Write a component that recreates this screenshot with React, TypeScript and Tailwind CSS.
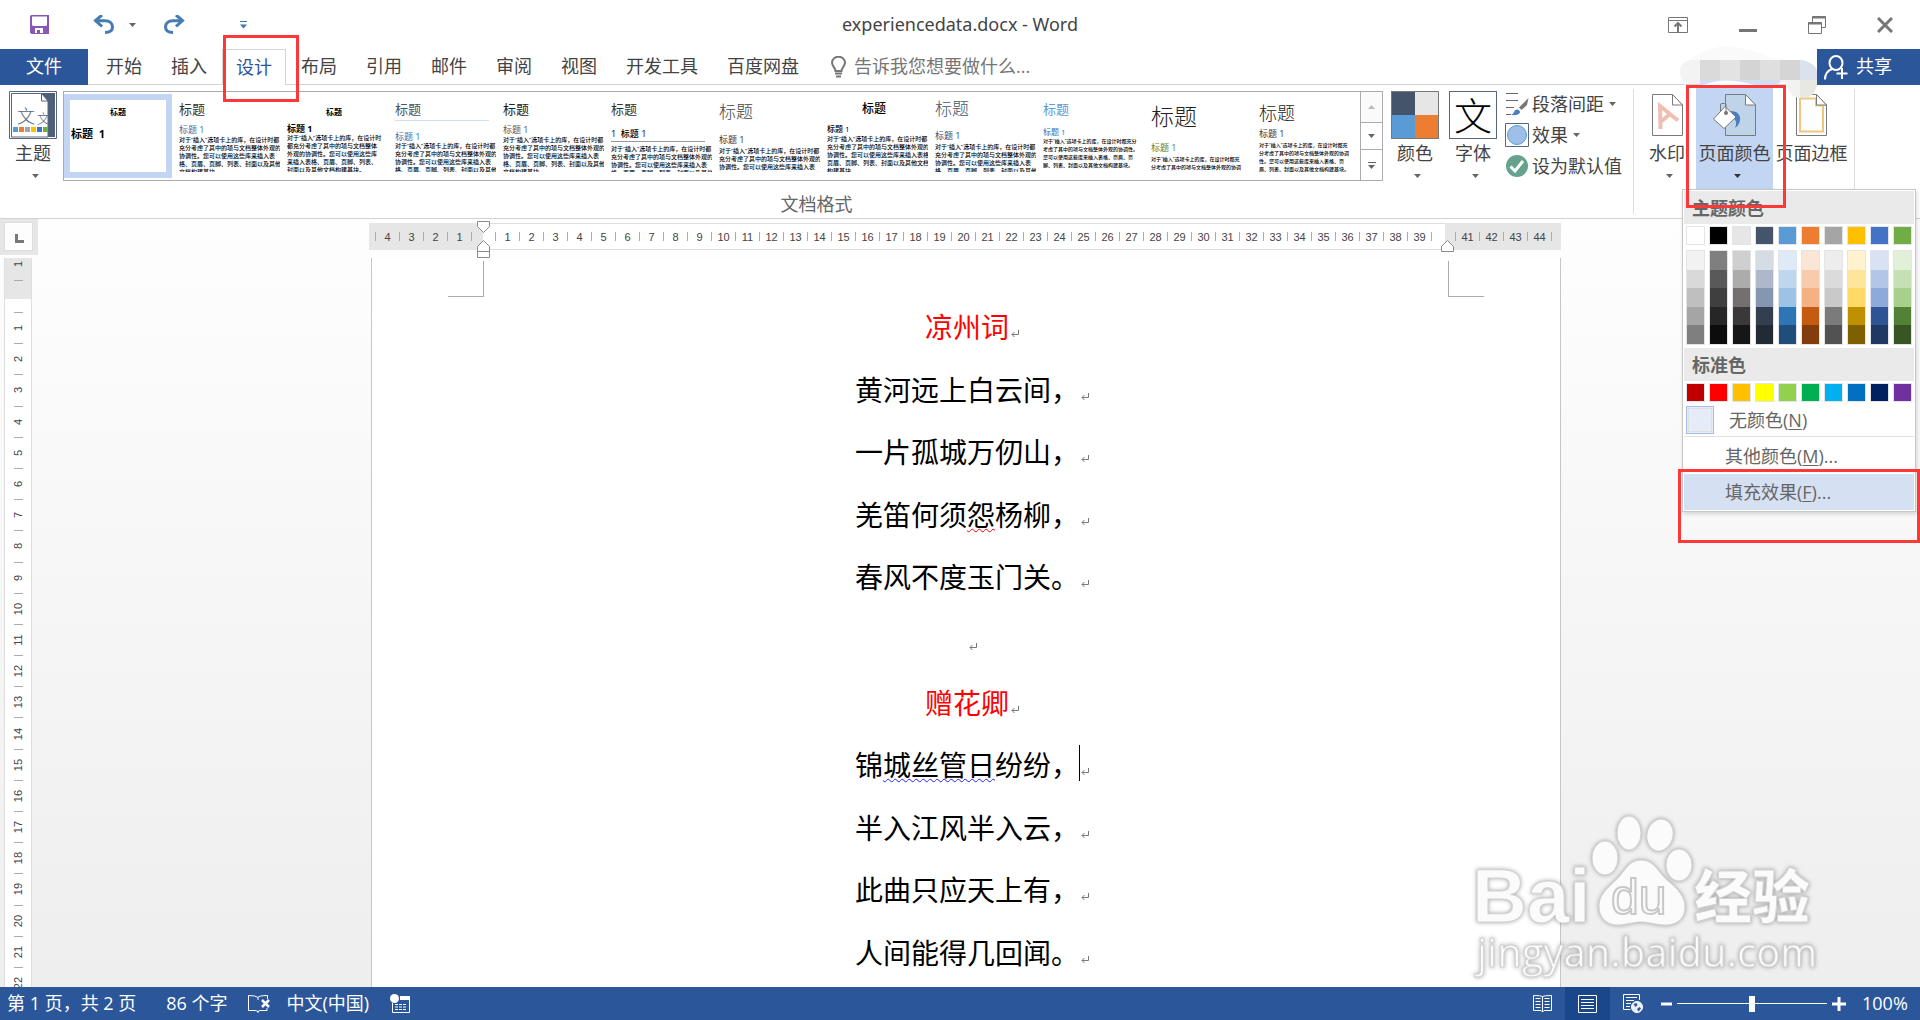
import clsx from "clsx";
import React from "react";

const TABS = ["开始", "插入", "设计", "布局", "引用", "邮件", "审阅", "视图", "开发工具", "百度网盘"];

const BODY = [
  "对于“插入”选项卡上的库\uFF0C在设计时都",
  "充分考虑了其中的项与文档整体外观的",
  "协调性。您可以使用这些库来插入表",
  "格、页眉、页脚、列表、封面以及其他",
  "文档构建基块。",
];

const BODY_NARROW = [
  "对于“插入”选项卡上的库\uFF0C在设计时",
  "都充分考虑了其中的项与文档整体",
  "外观的协调性。您可以使用这些库",
  "来插入表格、页眉、页脚、列表、",
  "封面以及其他文档构建基块。",
];

const BODY_CENTERED = [
  "对于“插入”选项卡上的库\uFF0C在设计时都",
  "充分考虑了其中的项与文档整体外观的",
  "协调性。您可以使用这些库来插入表格",
  "页眉、页脚、列表、封面以及其他文档",
  "构建基块。",
];

const BODY_WIDE = [
  "对于“插入”选项卡上的库\uFF0C在设计时都充分",
  "考虑了其中的项与文档整体外观的协调性。",
  "您可以使用这些库来插入表格、页眉、页",
  "脚、列表、封面以及其他文档构建基块。",
];

const BODY_LOOSE = [
  "对于“插入”选项卡上的库\uFF0C在设计时都充",
  "分考虑了其中的项与文档整体外观的协调",
  "性。您可以使用这些库来插入表格、页",
  "眉、列表、封面以及其他文档构建基块。",
];

type Preview = {
  title: string;
  heading: string;
  body: string;
  lines: string[];
  headingText?: string;
};

const PREVIEWS: Preview[] = [
  {
    title: "text-[13px] leading-[18px] text-[#333]",
    heading: "mt-[7px] text-[9px] text-[#41719c]",
    body: "mt-px text-[6px]",
    lines: BODY,
  },
  {
    title: "text-center text-[8px] leading-[24px] font-bold text-black",
    heading: "text-[9px] font-bold text-black",
    body: "text-[6px]",
    lines: BODY_NARROW,
  },
  {
    title: "border-b border-[#cfe2f3] pb-[2px] text-[13px] leading-[18px] text-[#44546a]",
    heading: "mt-[11px] text-[9px] text-[#2e74b5]",
    body: "text-[6px]",
    lines: BODY,
  },
  {
    title: "text-[13px] leading-[18px] text-[#222]",
    heading: "mt-[7px] text-[9px] text-[#555]",
    body: "mt-px text-[6px]",
    lines: BODY,
  },
  {
    title: "text-[13px] leading-[18px] text-[#333]",
    heading: "mt-[11px] border-b border-[#999] pb-[2px] text-[9px] font-medium text-black",
    body: "mt-[3px] text-[6px]",
    lines: BODY,
    headingText: "1  标题 1",
  },
  {
    title: "text-[17px] leading-[24px] font-light text-[#444]",
    heading: "mt-[11px] text-[9px] text-[#333]",
    body: "mt-[2px] text-[6px]",
    lines: BODY,
  },
  {
    title: "text-center text-[12px] leading-[18px] font-medium text-black",
    heading: "mt-[6px] text-[8px] font-medium text-black",
    body: "mt-px text-[6px]",
    lines: BODY_CENTERED,
  },
  {
    title: "text-[17px] leading-[18px] font-light text-[#44546a]",
    heading: "mt-[13px] text-[9px] text-[#1f4e79]",
    body: "mt-[2px] text-[6px]",
    lines: BODY,
  },
  {
    title: "text-[13px] leading-[18px] text-[#5b9bd5]",
    heading: "mt-[9px] text-[8px] text-[#2e74b5]",
    body: "text-[5px]",
    lines: BODY_WIDE,
  },
  {
    title: "text-[23px] leading-[32px] font-light text-[#222]",
    heading: "mt-[11px] text-[9px] text-[#538135]",
    body: "mt-[2px] text-[5px]",
    lines: BODY_LOOSE,
  },
  {
    title: "text-[18px] leading-[26px] font-light text-[#222]",
    heading: "mt-[3px] text-[9px] text-[#333]",
    body: "mt-[2px] text-[5px]",
    lines: BODY_LOOSE,
  },
];

const THEME_COLORS = [
  { name: "白色", base: "#ffffff", shades: ["#f2f2f2", "#d9d9d9", "#bfbfbf", "#a5a5a5", "#7f7f7f"] },
  { name: "黑色", base: "#000000", shades: ["#7f7f7f", "#595959", "#3f3f3f", "#262626", "#0c0c0c"] },
  { name: "浅灰", base: "#e7e6e6", shades: ["#d0cece", "#aeabab", "#757070", "#3a3838", "#171616"] },
  { name: "蓝灰", base: "#44546a", shades: ["#d6dce4", "#adb9ca", "#8496b0", "#323f4f", "#222a35"] },
  { name: "蓝色", base: "#5b9bd5", shades: ["#deebf6", "#bdd7ee", "#9cc3e5", "#2e75b5", "#1e4e79"] },
  { name: "橙色", base: "#ed7d31", shades: ["#fbe5d5", "#f7cbac", "#f4b183", "#c55a11", "#833c0b"] },
  { name: "灰色", base: "#a5a5a5", shades: ["#ededed", "#dbdbdb", "#c9c9c9", "#7b7b7b", "#525252"] },
  { name: "金色", base: "#ffc000", shades: ["#fff2cc", "#fee599", "#ffd965", "#bf9000", "#7f6000"] },
  { name: "深蓝", base: "#4472c4", shades: ["#d9e2f3", "#b4c6e7", "#8eaadb", "#2f5496", "#1f3864"] },
  { name: "绿色", base: "#70ad47", shades: ["#e2efd9", "#c5e0b3", "#a8d08d", "#538135", "#375623"] },
];

const STANDARD_COLORS = [
  "#c00000", "#ff0000", "#ffc000", "#ffff00", "#92d050",
  "#00b050", "#00b0f0", "#0070c0", "#002060", "#7030a0",
];

const LEFT_MARKS = [4, 3, 2, 1];
const TEXT_MARKS = Array.from({ length: 39 }, (_, i) => i + 1);
const RIGHT_MARKS = [41, 42, 43, 44];
const SIDE_MARKS = Array.from({ length: 22 }, (_, i) => i + 1);

const Caret: React.FC<{ className?: string }> = ({ className }) => (
  <svg viewBox="0 0 7 4" className={clsx("h-1 w-[7px] shrink-0", className)} fill="currentColor">
    <path d="M0 0h7L3.5 4z" />
  </svg>
);

const SaveIcon = () => (
  <svg viewBox="0 0 19 19" className="h-[19px] w-[19px]">
    <path d="M0 1.500Q0 0 1.500 0H19V19H1.500L0 17.500z" fill="#8a58b0" />
    <path d="M2 1.500h15V10l-1 1H3l-1-1z" fill="#fff" />
    <path d="M5 13h8v5h-3v-3H7v3H5z" fill="#fff" />
  </svg>
);

const UndoIcon: React.FC<{ flip?: boolean }> = ({ flip }) => (
  <svg viewBox="0 0 21 19" className={clsx("h-[19px] w-[21px]", flip && "-scale-x-100")} fill="none" stroke="#467cb2" strokeWidth="3">
    <path d="M9 0L2.500 5.500L9 11.500" />
    <path d="M2.500 5.700H12C17 5.700 19.500 8.500 19.500 12C19.500 15.500 17 17.500 12 17.500" />
  </svg>
);

const TitleBar = () => (
  <header className="relative flex h-[49px] shrink-0 items-center justify-between">
    <div className="flex h-[46px] items-center pl-[30px]">
      <button aria-label="保存"><SaveIcon /></button>
      <button aria-label="撤消" className="ml-11"><UndoIcon /></button>
      <button aria-label="撤消列表" className="ml-[15px] text-[#666]"><Caret /></button>
      <button aria-label="恢复" className="ml-7"><UndoIcon flip /></button>
      <button aria-label="自定义快速访问工具栏" className="ml-[55px]">
        <svg viewBox="0 0 7 8" className="h-2 w-[7px]" fill="#3f76b0">
          <path d="M0 0h7v1H0zM0 3.500h7L3.500 7.500z" />
        </svg>
      </button>
    </div>
    <h1 className="absolute inset-x-0 top-3 text-center font-['Noto_Sans',sans-serif] text-lg leading-6 text-[#444]">
      experiencedata.docx - Word
    </h1>
    <div className="relative flex h-[46px] items-center gap-[51px] pr-[27px] text-[#767676]">
      <button aria-label="功能区显示选项">
        <svg viewBox="0 0 20 16" className="h-4 w-5" fill="none" stroke="currentColor">
          <path d="M0.500 0.500h19v15H0.500zM0.500 3.500h19" />
          <path d="M10 15V6.500M6.500 9.500L10 6L13.500 9.500" strokeWidth="2" />
        </svg>
      </button>
      <button aria-label="最小化">
        <svg viewBox="0 0 18 16" className="h-4 w-[18px]" fill="currentColor"><path d="M0 12h18v3H0z" /></svg>
      </button>
      <button aria-label="向下还原">
        <svg viewBox="0 0 18 18" className="h-[18px] w-[18px]" fill="none" stroke="currentColor">
          <path d="M4.500 6V0.500h13v11H14" />
          <path d="M4 1.500h14" strokeWidth="2" />
          <path d="M0.500 6.500h13v11H0.500z" />
          <path d="M0 7.500h14" strokeWidth="2" />
        </svg>
      </button>
      <button aria-label="关闭">
        <svg viewBox="0 0 16 16" className="h-4 w-4" fill="none" stroke="currentColor" strokeWidth="3">
          <path d="M1 1l14 14M15 1L1 15" />
        </svg>
      </button>
    </div>
  </header>
);

const TabRow = () => (
  <nav className="flex h-9 shrink-0 items-stretch border-b border-[#d5d5d5] text-lg text-[#444]">
    <button className="-mb-px w-[88px] bg-[#2b579a] pb-[2px] text-white">文件</button>
    <div className="ml-1 flex gap-px">
      {TABS.map((tab) => (
        <button
          key={tab}
          className={clsx(
            "px-[14px] pb-[2px]",
            tab === "设计" && "-mb-px border border-b-0 border-[#d5d5d5] bg-white px-[13px]! text-[#2b579a]"
          )}
        >
          {tab}
        </button>
      ))}
    </div>
    <label className="ml-[18px] flex items-center gap-2 text-[#767676]">
      <svg viewBox="0 0 15 22" className="h-[22px] w-[15px]" fill="none" stroke="currentColor" strokeWidth="2">
        <path d="M4.500 15C4.500 11.500 1 10.500 1 6.500A6.500 5.800 0 0 1 14 6.500C14 10.500 10.500 11.500 10.500 15z" />
        <path d="M4 17.500h7M5 20.500h5" />
      </svg>
      <input
        aria-label="告诉我您想要做什么"
        placeholder="告诉我您想要做什么..."
        className="w-[200px] bg-transparent pb-[2px] placeholder:text-[#767676] focus:outline-none"
      />
    </label>
    <button className="z-10 -mb-px ml-auto flex w-[103px] items-center gap-2 bg-[#2b579a] pl-[7px] text-white">
      <svg viewBox="0 0 24 25" className="h-[25px] w-6" fill="none" stroke="currentColor" strokeWidth="2">
        <ellipse cx="12" cy="8" rx="6.500" ry="7" />
        <path d="M1 24.500C1 19 4 15.500 8 14M18 13v11M12.500 18.500h11" />
      </svg>
      <span className="pb-[2px]">共享</span>
    </button>
  </nav>
);

const AccountSmudge = () => (
  <svg viewBox="0 0 137 54" className="pointer-events-none absolute top-[44px] right-[103px] z-20 h-[54px] w-[137px]">
    <defs>
      <clipPath id="pill">
        <path d="M10 16H122Q137 20 137 28V40Q135 54 122 54Q108 54 106 38L90 41H10Q0 38 0 28Q0 18 10 16z" />
      </clipPath>
    </defs>
    <path d="M10 16Q20 6 44 2Q70 4 92 14L110 16z" fill="#fafafa" />
    <g clipPath="url(#pill)">
      <path d="M0 16h20v24H0z" fill="#f3f3f3" />
      <path d="M20 16h20v20H20z" fill="#dadada" />
      <path d="M40 16h20v20H40z" fill="#e3e3e3" />
      <path d="M60 16h20v20H60z" fill="#d4d4d4" />
      <path d="M80 16h20v20H80z" fill="#dfdfdf" />
      <path d="M100 16h20v20h-20z" fill="#d5d5d5" />
      <path d="M120 16h17v20h-17z" fill="#dbe2ee" />
      <path d="M20 36h80v5H20z" fill="#d3def2" />
      <path d="M24 41Q44 32 74 41z" fill="#fff" />
      <path d="M100 36h20v18h-20z" fill="#f2f2f2" />
      <path d="M120 36h17v18h-17z" fill="#e9e7e4" />
    </g>
  </svg>
);

const ThemeIcon = () => (
  <svg viewBox="0 0 48 48" className="h-12 w-12">
    <defs>
      <clipPath id="sheet"><path d="M3 3h36v42H3z" /></clipPath>
    </defs>
    <path d="M0.500 0.500h47v47H0.500z" fill="#fff" stroke="#56667f" />
    <path d="M33 2h13v44h-7z" fill="#4f5f7a" />
    <path d="M2.500 2.500h30l6.500 7.500v36H2.500z" fill="#fff" stroke="#56667f" />
    <path d="M32.500 2.500v7.500h6.500z" fill="#fff" stroke="#56667f" />
    <g clipPath="url(#sheet)" fill="#56667f" fontFamily="Noto Sans CJK SC" fontWeight="300">
      <text x="8" y="32" fontSize="18">文</text>
      <text x="28" y="32" fontSize="13">文</text>
      <path d="M4 36h5v5H4z" fill="#5b9bd5" />
      <path d="M10 36h5v5h-5z" fill="#ed7d31" />
      <path d="M16 36h5v5h-5z" fill="#a5a5a5" />
      <path d="M22 36h5v5h-5z" fill="#ffc000" />
      <path d="M28 36h5v5h-5z" fill="#4472c4" />
      <path d="M34 36h5v5h-5z" fill="#70ad47" />
    </g>
  </svg>
);

const SheetOutline: React.FC<{ fill?: string; x?: number }> = ({ fill = "#fff", x = 0 }) => (
  <g transform={`translate(${x} 0)`} fill={fill} stroke="#7a7a7a">
    <path d="M0.500 0.500h20l10 10.500v30.500h-30z" />
    <path d="M20.500 0.500V11h10z" fill="#fff" />
  </g>
);

const BigButton: React.FC<{
  label: string;
  caret?: boolean;
  className?: string;
  caretClass?: string;
  children: React.ReactNode;
}> = ({ label, caret = true, className, caretClass, children }) => (
  <button className={clsx("flex h-[104px] shrink-0 flex-col items-center pt-[6px] whitespace-nowrap", className)}>
    <span className="flex h-12 items-center">{children}</span>
    <span className="mt-[2px] text-lg leading-6">{label}</span>
    {caret && <Caret className={clsx("mt-[9px] ml-[5px] text-[#666]", caretClass)} />}
  </button>
);

const Gallery = () => (
  <div className="mt-[6px] ml-[6px] flex h-[90px] min-w-0 flex-1 border border-[#ababab]">
    <div className="flex min-w-0 flex-1 overflow-hidden py-[2px] text-left">
      <button className="h-[84px] w-[108px] shrink-0 border-6 border-[#c2d5f2] text-left font-bold text-black">
        <span className="block text-center text-[8px] leading-6">标题</span>
        <span className="block h-12 pl-px text-[11px] leading-[20px]">标题&nbsp; 1</span>
      </button>
      {PREVIEWS.map((p, i) => (
        <button key={i} className="h-[84px] w-[108px] shrink-0 py-[6px] pl-[7px] text-left">
          <span className="block h-[72px] overflow-hidden whitespace-pre">
            <span className={clsx("mr-[7px] block", p.title)}>标题</span>
            <span className={clsx("mr-[7px] block leading-[10px]", p.heading)}>{p.headingText ?? "标题 1"}</span>
            <span className={clsx("block leading-[8px] font-medium text-black", p.body)}>
              {p.lines.map((line) => (
                <span key={line} className="block">{line}</span>
              ))}
            </span>
          </span>
        </button>
      ))}
    </div>
    <div className="flex w-[22px] shrink-0 flex-col border-l border-[#ababab] text-[#666]">
      <button aria-label="上一行" className="flex h-[30px] items-center justify-center bg-[#fafafa] text-[#bbb]">
        <Caret className="rotate-180" />
      </button>
      <button aria-label="下一行" className="flex h-7 items-center justify-center border-y border-[#ababab]">
        <Caret />
      </button>
      <button aria-label="其他" className="flex flex-1 flex-col items-center justify-center gap-[2px]">
        <span className="h-px w-2 bg-[#666]" />
        <Caret />
      </button>
    </div>
  </div>
);

const Ribbon = () => (
  <section className="flex h-[134px] shrink-0 border-b border-[#d2d2d2] text-[#444]">
    <div className="flex min-w-0 flex-1 flex-col">
      <div className="flex">
        <BigButton label="主题" className="ml-[9px] w-12"><ThemeIcon /></BigButton>
        <Gallery />
        <BigButton label="颜色" className="ml-2 w-12">
          <svg viewBox="0 0 48 48" className="h-12 w-12">
            <path d="M0 0h24v24H0z" fill="#44546a" />
            <path d="M24 0h24v24H24z" fill="#e7e6e6" />
            <path d="M0 24h24v24H0z" fill="#5b9bd5" />
            <path d="M24 24h24v24H24z" fill="#ed7d31" />
            <path d="M0.500 0.500h47v47H0.500z" fill="none" stroke="#777" />
          </svg>
        </BigButton>
        <BigButton label="字体" className="ml-[10px] w-12">
          <span className="flex h-12 w-12 items-center justify-center border border-[#56667f] bg-white text-[38px] leading-none font-light text-black">
            文
          </span>
        </BigButton>
        <div className="mt-[3px] mr-[11px] ml-2 flex w-[117px] flex-col text-lg whitespace-nowrap">
          <button className="flex h-[31px] items-center">
            <svg viewBox="0 0 24 24" className="h-6 w-6" fill="none" stroke="#666">
              <path d="M1 1.500h12M1 8.500h12M1 15.500h8M1 22.500h5" />
              <path d="M23.500 6L22 13l-5.500 5-2.500-2.500z" fill="#777" stroke="none" />
              <path d="M6 23c3-1 2.500-3.500 4.500-5s5 0.500 4.500 2.500S11 23.500 6 23z" fill="#4a80bd" stroke="none" />
            </svg>
            <span className="ml-[3px]">段落间距</span>
            <Caret className="ml-[5px] text-[#666]" />
          </button>
          <button className="flex h-[31px] items-center">
            <svg viewBox="0 0 24 24" className="h-6 w-6">
              <path d="M0.500 0.500h23v23H0.500z" fill="#fff" stroke="#56667f" />
              <circle cx="12" cy="12" r="9.500" fill="#9dbfe8" stroke="#5b9bd5" />
            </svg>
            <span className="ml-[3px]">效果</span>
            <Caret className="ml-[5px] text-[#666]" />
          </button>
          <button className="flex h-[31px] items-center">
            <svg viewBox="0 0 24 24" className="h-6 w-6">
              <circle cx="12" cy="12" r="11" fill="#66a38c" />
              <path d="M5.500 12.500l4.500 4.500 8-10" fill="none" stroke="#fff" strokeWidth="3" />
            </svg>
            <span className="ml-[3px]">设为默认值</span>
          </button>
        </div>
      </div>
      <p className="mt-[3px] text-center text-lg leading-6 text-[#666]">文档格式</p>
    </div>
    <div className="my-1 w-px bg-[#dedede]" />
    <div className="flex pl-[2px]">
      <BigButton label="水印" className="w-[60px] pl-[2px]">
        <svg viewBox="0 0 31 42" className="h-[42px] w-[31px]">
          <SheetOutline />
          <path d="M8.500 35L8 12L26 26.500M8.500 28L18 20" fill="none" stroke="#f0bfb4" strokeWidth="4" />
        </svg>
      </BigButton>
      <BigButton label="页面颜色" className="w-[77px] bg-[#c2d5f2]" caretClass="text-[#333]!">
        <svg viewBox="0 0 43 42" className="h-[42px] w-[43px]">
          <SheetOutline fill="#bfd4e8" x={12} />
          <path d="M16 17Q25 16 27 23Q28 30 22 34Q25 27 20 24z" fill="#4a80bd" />
          <path d="M0.500 25L12 12.500L23 23L11 34.500z" fill="#fff" stroke="#777" />
          <path d="M7.500 17V11Q7.500 9.500 9 9.500H11.500Q13 9.500 13 11V19" fill="none" stroke="#777" />
          <circle cx="13" cy="19" r="2" fill="#777" />
        </svg>
      </BigButton>
      <BigButton label="页面边框" caret={false} className="w-[77px]">
        <svg viewBox="0 0 31 42" className="h-[42px] w-[31px]">
          <SheetOutline />
          <path d="M4 4.500h16V11.500h7v26H4z" fill="none" stroke="#ecc77c" strokeWidth="2" />
          <path d="M20.500 0.500V11h10z" fill="#fff" stroke="#7a7a7a" />
        </svg>
      </BigButton>
    </div>
    <div className="my-1 mr-[65px] ml-1 w-px bg-[#dedede]" />
  </section>
);

const PageColorMenu = () => (
  <div className="absolute top-[189px] right-1 z-20 w-[234px] border border-[#c6c6c6] bg-white p-px text-lg leading-6 text-[#666] shadow-[1px_2px_4px_rgba(0,0,0,0.15)]">
    <h2 className="h-[33px] bg-[#eaeaea] px-2 pt-[5px] font-bold">主题颜色</h2>
    <div className="flex gap-1 px-[2px] pt-[2px]">
      {THEME_COLORS.map((c) => (
        <button key={c.name} aria-label={c.name} className="h-[19px] w-[19px] border border-[#e2e4e7]" style={{ background: c.base }} />
      ))}
    </div>
    <div className="flex gap-1 px-[2px] pt-[5px] pb-[3px]">
      {THEME_COLORS.map((c) => (
        <div key={c.name} className="flex h-[95px] w-[19px] flex-col border border-[#e2e4e7]">
          {c.shades.map((shade) => (
            <button key={shade} aria-label={`${c.name} ${shade}`} className="flex-1" style={{ background: shade }} />
          ))}
        </div>
      ))}
    </div>
    <h2 className="h-[33px] bg-[#eaeaea] px-2 pt-[5px] font-bold">标准色</h2>
    <div className="flex gap-1 px-[2px] pt-[2px]">
      {STANDARD_COLORS.map((c) => (
        <button key={c} aria-label={c} className="h-[19px] w-[19px] border border-[#e2e4e7]" style={{ background: c }} />
      ))}
    </div>
    <button className="flex h-[35px] w-full items-center border-b border-[#e1e1e1] pt-px pl-[2px]">
      <span className="mr-[15px] h-7 w-7 border border-[#a3bde3] bg-[#e5ecf7] p-px">
        <span className="block h-full border border-[#dcdfe4]" />
      </span>
      <span>无颜色(<u className="underline-offset-2">N</u>)</span>
    </button>
    <button className="block h-[37px] w-full pl-[41px] text-left">
      其他颜色(<u className="underline-offset-2">M</u>)...
    </button>
    <button className="block h-9 w-full bg-[#d5e0f2] pl-[41px] text-left">
      填充效果(<u className="underline-offset-2">F</u>)...
    </button>
  </div>
);

const RulerCell: React.FC<{ mark: number }> = ({ mark }) => (
  <span className="flex w-6 items-center">
    <span className="h-[9px] w-px bg-[#ababab]" />
    <span className="flex-1 pt-[2px] text-center">{mark}</span>
  </span>
);

const RulerStub: React.FC = () => (
  <span className="flex items-center">
    <span className="h-[9px] w-px bg-[#ababab]" />
  </span>
);

const HorizontalRuler = () => (
  <div className="relative mt-1 flex h-[27px] w-[1190px] shrink-0 font-['Liberation_Sans',sans-serif] text-[11px] text-[#444]">
    <div className="-ml-[2px] flex w-[114px] bg-[#e6e6e6] pl-[6px]">
      {LEFT_MARKS.map((m) => <RulerCell key={m} mark={m} />)}
      <RulerStub />
    </div>
    <div className="flex flex-1 border-y border-[#dedede] bg-white pl-3">
      {TEXT_MARKS.map((m) => <RulerCell key={m} mark={m} />)}
      <RulerStub />
    </div>
    <div className="flex w-[116px] bg-[#e6e6e6] pl-[10px]">
      {RIGHT_MARKS.map((m) => <RulerCell key={m} mark={m} />)}
      <RulerStub />
    </div>
    <svg viewBox="0 0 13 37" className="absolute -top-[2px] left-[106px] h-[37px] w-[13px]" fill="#fff" stroke="#8a8a8a">
      <path d="M0.500 0.500h12v5L6.500 11.500L0.500 5.500z" />
      <path d="M0.500 36.500h12v-11L6.500 19.500L0.500 25.500zM0.500 30.500h12" />
    </svg>
    <svg viewBox="0 0 13 12" className="absolute top-[17px] left-[1070px] h-3 w-[13px]" fill="#fff" stroke="#8a8a8a">
      <path d="M0.500 11.500h12v-5L6.500 0.500L0.500 6.500z" />
    </svg>
  </div>
);

const VerticalRuler = () => (
  <div className="w-[38px]">
    <div className="flex h-9 bg-[#e6e6e6] pt-[3px] pl-1">
      <button aria-label="左对齐制表符" className="flex h-[29px] w-[29px] items-center justify-center border border-[#dedede] bg-[#fdfdfd]">
        <span className="mt-1 ml-px h-[9px] w-[9px] border-b-3 border-l-3 border-[#777]" />
      </button>
    </div>
    <div className="mt-[3px] ml-1 flex w-7 flex-col items-center border-x border-[#dedede] bg-white font-['Liberation_Sans',sans-serif] text-[11px] leading-3 text-[#444]">
      <div className="flex h-[41px] w-full flex-col items-center bg-[#e6e6e6]">
        <span className="-rotate-90">1</span>
        <span className="mt-[10px] h-px w-[9px] bg-[#ababab]" />
      </div>
      <div className="mt-[13px] flex h-[686px] flex-col">
        {SIDE_MARKS.map((m) => (
          <span key={m} className="flex flex-1 flex-col items-center">
            <span className="h-px w-[9px] bg-[#ababab]" />
            <span className="flex flex-1 items-center"><span className="-rotate-90">{m}</span></span>
          </span>
        ))}
      </div>
    </div>
  </div>
);

type VerseProps = {
  title?: boolean;
  cursor?: boolean;
  children?: React.ReactNode;
};

const Verse: React.FC<VerseProps> = ({ title, cursor, children }) => (
  <p className={clsx("flex flex-1 items-center justify-center", title ? "text-[#ff0000]" : "text-black")}>
    <span className="relative h-10">
      {children}
      {cursor && <span className="absolute top-0 left-full h-9 w-px bg-black" />}
      <svg viewBox="0 0 8 7" className="absolute top-[23px] left-full ml-[2px] h-[7px] w-2" fill="none" stroke="#777">
        <path d="M7.500 0v4.500H1M3.500 2L1 4.500L3.500 7" />
      </svg>
    </span>
  </p>
);

const Page = () => (
  <article className="relative mt-2 w-[1190px] flex-1 border-x border-[#c6c6c6] bg-white pt-[38px] pl-[2px]">
    <span className="absolute top-[3px] left-[76px] h-9 w-9 border-r border-b border-[#ababab]" />
    <span className="absolute top-[3px] right-[76px] h-9 w-9 border-b border-l border-[#ababab]" />
    <div className="flex h-[688px] flex-col text-[28px] leading-10">
      <Verse title>凉州词</Verse>
      <Verse>黄河远上白云间&#xFF0C;</Verse>
      <Verse>一片孤城万仞山&#xFF0C;</Verse>
      <Verse>
        羌笛何须<span className="underline decoration-[#ff0000] decoration-wavy decoration-1 underline-offset-2">怨</span>杨柳&#xFF0C;
      </Verse>
      <Verse>春风不度玉门关。</Verse>
      <Verse />
      <Verse title>赠花卿</Verse>
      <Verse cursor>
        锦<span className="underline decoration-[#2222ff] decoration-wavy decoration-1 underline-offset-2">城丝管日</span>纷纷&#xFF0C;
      </Verse>
      <Verse>半入江风半入云&#xFF0C;</Verse>
      <Verse>此曲只应天上有&#xFF0C;</Verse>
      <Verse>人间能得几回闻。</Verse>
    </div>
  </article>
);

const SiteMark = () => (
  <svg
    viewBox="0 0 350 172"
    className="pointer-events-none absolute right-[100px] bottom-1 h-[172px] w-[350px] drop-shadow-[0_0_2px_rgba(0,0,0,0.35)]"
    fill="#fbfbfb"
    stroke="#d2d2d2"
  >
    <ellipse cx="135" cy="47" rx="13" ry="17" />
    <ellipse cx="159" cy="22" rx="12" ry="17" />
    <ellipse cx="190" cy="24" rx="13" ry="16" transform="rotate(12 190 24)" />
    <ellipse cx="209" cy="54" rx="13" ry="16" />
    <path d="M171 49C185 49 188 62 198 70C208 78 215 86 215 96C215 109 205 115 193 114C183 113 178 111 171 111C164 111 159 113 150 114C137 115 129 107 129 95C129 85 136 78 145 70C155 61 158 49 171 49z" />
    <text x="2" y="111" fontSize="76" fontWeight="700" fontFamily="Liberation Sans">Bai</text>
    <text x="141" y="103" fontSize="50" fontFamily="Liberation Sans" strokeWidth="2" stroke="#c8c8c8">du</text>
    <text x="224" y="107" fontSize="58" fontWeight="900" fontFamily="Noto Sans CJK SC">经验</text>
    <text x="7" y="156" fontSize="40" fontFamily="Open Sans">jingyan.baidu.com</text>
  </svg>
);

const StatusBar = () => (
  <footer className="z-10 flex h-[33px] shrink-0 items-center bg-[#2b579a] pl-[7px] text-lg text-white">
    <span className="pb-[2px]">第 1 页&#xFF0C;共 2 页</span>
    <span className="ml-[30px] pb-[2px]">86 个字</span>
    <button aria-label="校对" className="ml-5">
      <svg viewBox="0 0 22 18" className="h-[18px] w-[22px]" fill="none" stroke="currentColor">
        <path d="M10 2.500Q8 0.500 0.500 0.500V15.500H7Q10 15.500 10 17.500Q10 15.500 12 15.500H19V13M10 2.500V5M10 2.500Q11 0.500 19.500 0.500V4" />
        <path d="M14 5l7 7M21 5l-7 7" strokeWidth="2.500" />
      </svg>
    </button>
    <span className="ml-[17px] pb-[2px]">中文(中国)</span>
    <button aria-label="宏" className="ml-[21px]">
      <svg viewBox="0 0 20 19" className="h-[19px] w-5" fill="currentColor">
        <circle cx="4.500" cy="4.500" r="4.500" />
        <path d="M10 2h10v4H10z" />
        <path d="M2.500 9v9.500h17V6" fill="none" stroke="currentColor" />
        <path d="M5 10.500h12M5 13h12M5 15.500h12" fill="none" stroke="currentColor" strokeDasharray="3 1" />
      </svg>
    </button>
    <div className="ml-auto flex h-full items-center">
      <button aria-label="阅读视图" className="mr-[12px]">
        <svg viewBox="0 0 20 18" className="h-[18px] w-5" fill="none" stroke="currentColor">
          <path d="M9.500 1.500Q8 0.500 0.500 0.500V15.500H8L9.500 17L11 15.500H18.500V0.500Q11 0.500 9.500 1.500zV17" />
          <path d="M2.500 3.500h5M2.500 6.500h5M2.500 9.500h5M2.500 12.500h5M11.500 3.500h5M11.500 6.500h5M11.500 9.500h5M11.500 12.500h5" />
        </svg>
      </button>
      <button aria-label="页面视图" className="flex h-full w-[45px] items-center justify-center bg-[#1a478b]">
        <svg viewBox="0 0 19 18" className="h-[18px] w-[19px]" fill="none" stroke="currentColor">
          <path d="M0.500 0.500h18v17H0.500zM3 4.500h13M3 7.500h13M3 10.500h13M3 13.500h13" />
        </svg>
      </button>
      <button aria-label="Web 版式视图" className="ml-[13px]">
        <svg viewBox="0 0 20 19" className="h-[19px] w-5" fill="none" stroke="currentColor">
          <path d="M7.500 15.500H0.500V0.500h16V6M3 3.500h11M3 6.500h8M3 9.500h5M3 12.500h4" />
          <circle cx="14" cy="13" r="5.500" fill="#e8eef7" />
          <path d="M10.500 10l3-1 1 2-2 2zM14 15l2.500-2 1.500 1.500-2.500 3z" fill="#2b579a" stroke="none" />
        </svg>
      </button>
      <button aria-label="缩小" className="ml-[18px]">
        <svg viewBox="0 0 11 14" className="h-[14px] w-[11px]" fill="currentColor"><path d="M0 5.500h11v3H0z" /></svg>
      </button>
      <input
        type="range"
        aria-label="显示比例"
        min={10}
        max={190}
        defaultValue={100}
        className="mx-[5px] h-[18px] w-[150px] appearance-none bg-[linear-gradient(#fff,#fff)] bg-[length:100%_1px] bg-center bg-no-repeat [&::-webkit-slider-thumb]:h-4 [&::-webkit-slider-thumb]:w-[6px] [&::-webkit-slider-thumb]:appearance-none [&::-webkit-slider-thumb]:bg-white"
      />
      <button aria-label="放大">
        <svg viewBox="0 0 14 14" className="h-[14px] w-[14px]" fill="currentColor"><path d="M0 5.500h5.500V0h3v5.500H14v3H8.500V14h-3V8.500H0z" /></svg>
      </button>
      <span className="w-[74px] pb-[2px] pl-4">100%</span>
    </div>
  </footer>
);

export default function App() {
  return (
    <div className="relative flex h-screen min-w-[1600px] flex-col overflow-hidden bg-white font-['Open_Sans','Noto_Sans_CJK_SC',sans-serif]">
      <TitleBar />
      <TabRow />
      <Ribbon />
      <main className="relative grid min-h-0 flex-1 grid-cols-[38px_1fr_26px] overflow-hidden bg-linear-to-b from-[#fefefe] to-[#eeeeee]">
        <VerticalRuler />
        <div className="flex flex-col items-center">
          <HorizontalRuler />
          <Page />
        </div>
        <SiteMark />
      </main>
      <StatusBar />
      <AccountSmudge />
      <PageColorMenu />
      <div className="pointer-events-none absolute top-[35px] left-[223px] z-30 h-[67px] w-[76px] border-3 border-[#fc3838]" />
      <div className="pointer-events-none absolute top-[85px] right-[134px] z-30 h-[123px] w-[100px] border-3 border-[#fc3838]" />
      <div className="pointer-events-none absolute top-[469px] right-0 z-30 h-[74px] w-[242px] border-3 border-[#fc3838]" />
    </div>
  );
}
